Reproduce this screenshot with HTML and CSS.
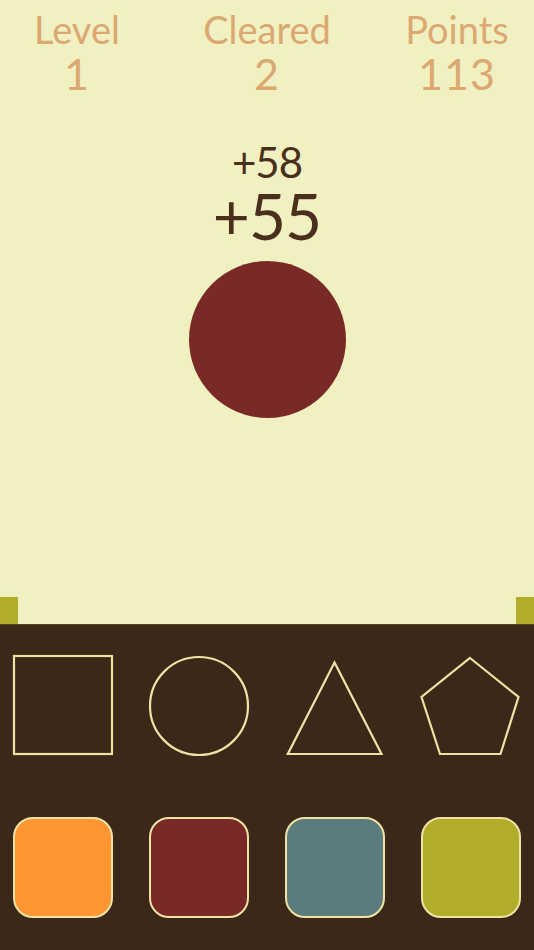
FILE: index.html
```html
<!DOCTYPE html>
<html>
<head>
<meta charset="utf-8">
<link rel="stylesheet" href="styles.css">
</head>
<body>
<div class="screen">
  <section class="play">
    <header class="stats">
      <div class="stat"><div class="label">Level</div><div class="value">1</div></div>
      <div class="stat"><div class="label">Cleared</div><div class="value">2</div></div>
      <div class="stat"><div class="label">Points</div><div class="value">113</div></div>
    </header>
    <div class="scores">
      <div class="bonus-small">+58</div>
      <div class="bonus-big">+55</div>
    </div>
    <div class="target"></div>
    <div class="timer">
      <span class="tick"></span>
      <span class="tick"></span>
    </div>
  </section>
  <section class="panel">
    <div class="row shapes">
      <svg class="shape" viewBox="0 0 100 100"><rect x="1" y="1" width="98" height="98"/></svg>
      <svg class="shape" viewBox="0 0 100 100"><circle cx="50" cy="51" r="49"/></svg>
      <svg class="shape" viewBox="0 0 100 100"><polygon points="49.5,7.5 2.8,99 96.5,99"/></svg>
      <svg class="shape" viewBox="0 0 100 100"><polygon points="49,3 97.5,42 79.5,99 19,99 0.5,42"/></svg>
    </div>
    <div class="row colors">
      <button class="swatch orange"></button>
      <button class="swatch red"></button>
      <button class="swatch teal"></button>
      <button class="swatch olive"></button>
    </div>
  </section>
</div>
</body>
</html>
```
FILE: styles.css
```css
html, body {
  margin: 0;
  padding: 0;
}
body {
  width: 534px;
  height: 950px;
  overflow: hidden;
  font-family: Lato, "Open Sans", sans-serif;
  background: #f1f0c1;
}
.screen {
  display: flex;
  flex-direction: column;
  height: 950px;
}
.play {
  height: 624px;
  display: flex;
  flex-direction: column;
  align-items: center;
  background: #f1f0c1;
}
.stats {
  width: 100%;
  display: grid;
  grid-template-columns: 154px 226px 154px;
  padding-top: 6px;
}
.stat {
  display: flex;
  flex-direction: column;
  align-items: center;
  color: #dba871;
  font-weight: 400;
}
.label {
  font-size: 38px;
  line-height: 46px;
  letter-spacing: 0;
}
.value {
  font-size: 43px;
  line-height: 44px;
  letter-spacing: 1px;
}
.scores {
  margin-top: 44px;
  display: flex;
  flex-direction: column;
  align-items: center;
  color: #4a2f1c;
}
.bonus-small {
  font-size: 42px;
  line-height: 44px;
  letter-spacing: -1px;
}
.bonus-big {
  font-size: 64px;
  line-height: 64px;
  letter-spacing: -1px;
}
.target {
  margin-top: 13px;
  width: 157px;
  height: 157px;
  border-radius: 50%;
  background: #7a2a26;
}
.timer {
  margin-top: auto;
  width: 100%;
  display: flex;
  justify-content: space-between;
}
.tick {
  width: 18px;
  height: 27px;
  background: #b2ac2b;
}
.panel {
  flex: 1;
  background: #3c2819;
  border-top: 1px solid #564426;
  box-sizing: border-box;
  display: flex;
  flex-direction: column;
  padding: 30px 13px 0;
  gap: 62px;
}
.row {
  display: flex;
  gap: 36px;
}
.shape {
  width: 100px;
  height: 100px;
  display: block;
  overflow: visible;
}
.shape rect, .shape circle, .shape polygon {
  fill: none;
  stroke: #efe2a4;
  stroke-width: 2.2;
}
.swatch {
  width: 100px;
  height: 101px;
  padding: 0;
  margin: 0;
  border: 2px solid #efe2a4;
  border-radius: 20px;
  box-sizing: border-box;
}
.orange { background: #fe9733; }
.red { background: #7a2a26; }
.teal { background: #5b7b7c; }
.olive { background: #b2ac2b; }
```
